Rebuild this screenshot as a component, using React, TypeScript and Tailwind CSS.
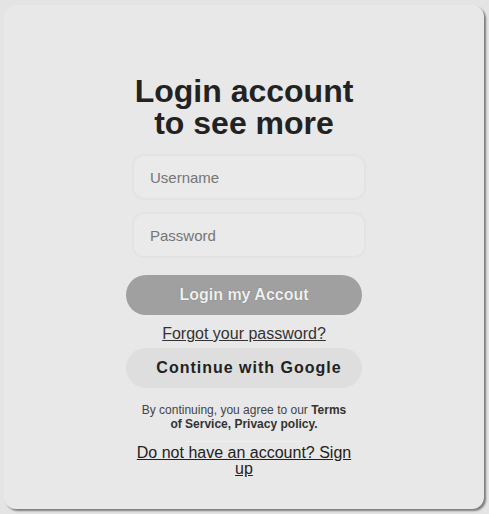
import React from "react";

export default function App() {
  return (
    <div
      className="h-[514px] w-[489px] overflow-hidden bg-[#e4e4e4] pt-[5px] pl-[4px]"
      style={{ fontFamily: '"Liberation Sans", Arial, sans-serif' }}
    >
      <div className="flex h-[504px] w-[480px] flex-col items-center rounded-[12px] bg-[#e8e8e8] pt-[70px] shadow-[2px_2px_2px_rgba(0,0,0,0.45)]">
        <h1 className="w-[240px] text-center text-[32px] font-bold leading-[32px] text-[#222]">
          Login account to see more
        </h1>
        <input
          type="text"
          placeholder="Username"
          className="mt-[15px] ml-[10px] h-[46px] w-[234px] rounded-[12px] border-2 border-[#e3e3e3] bg-[#eaeaea] pl-[16px] text-[15px] text-[#333] outline-none placeholder:text-[#757575]"
        />
        <input
          type="password"
          placeholder="Password"
          className="mt-[12px] ml-[10px] h-[46px] w-[234px] rounded-[12px] border-2 border-[#e3e3e3] bg-[#eaeaea] pl-[16px] text-[15px] text-[#333] outline-none placeholder:text-[#757575]"
        />
        <button className="mt-[17px] h-[40px] w-[236px] rounded-full bg-[#a0a0a0] text-[16px] font-bold text-[#f0f0f0] [text-shadow:0_0_1px_rgba(0,0,0,0.4)]">
          Login my Accout
        </button>
        <a className="mt-[10px] text-[16px] leading-[18px] text-[#333] underline">
          Forgot your password?
        </a>
        <button className="mt-[5px] h-[40px] w-[236px] rounded-full bg-[#dedede] pl-[10px] text-[16px] font-bold tracking-[1px] text-[#222]">
          Continue with Google
        </button>
        <p className="mt-[15px] w-[216px] text-center text-[12px] leading-[14px] text-[#444]">
          By continuing, you agree to our <b className="font-bold text-[#333]">Terms of Service, Privacy policy.</b>
        </p>
        <div className="mt-[10px] h-px w-[116px] bg-[#f0f0f0]" />
        <a className="mt-[3px] w-[216px] text-center text-[16px] leading-[16px] text-[#222] underline">
          Do not have an account? Sign up
        </a>
      </div>
    </div>
  );
}
